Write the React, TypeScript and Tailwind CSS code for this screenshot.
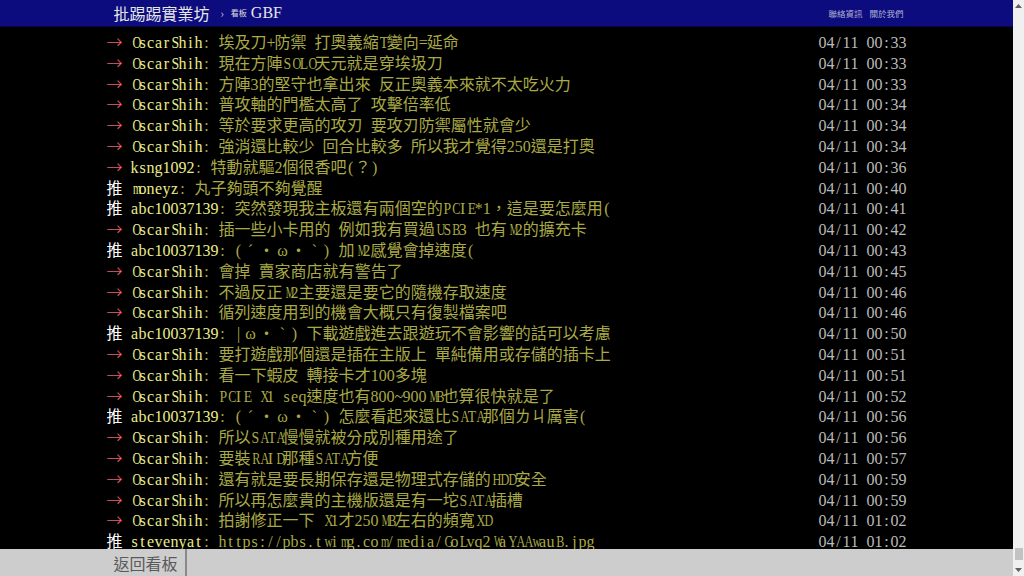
import React from "react";

type Push = {
  tag: "推" | "→";
  user: string;
  text: string;
  time: string;
  link?: boolean;
};

const pushes: Push[] = [
  { tag: "→", user: "OscarShih", text: "埃及刀+防禦 打奧義縮T變向=延命", time: "04/11 00:33" },
  { tag: "→", user: "OscarShih", text: "現在方陣SOLO天元就是穿埃圾刀", time: "04/11 00:33" },
  { tag: "→", user: "OscarShih", text: "方陣3的堅守也拿出來 反正奧義本來就不太吃火力", time: "04/11 00:33" },
  { tag: "→", user: "OscarShih", text: "普攻軸的門檻太高了 攻擊倍率低", time: "04/11 00:34" },
  { tag: "→", user: "OscarShih", text: "等於要求更高的攻刃 要攻刃防禦屬性就會少", time: "04/11 00:34" },
  { tag: "→", user: "OscarShih", text: "強消還比較少 回合比較多 所以我才覺得250還是打奧", time: "04/11 00:34" },
  { tag: "→", user: "ksng1092", text: "特動就驅2個很香吧(？)", time: "04/11 00:36" },
  { tag: "推", user: "moneyz", text: "丸子夠頭不夠覺醒", time: "04/11 00:40" },
  { tag: "推", user: "abc10037139", text: "突然發現我主板還有兩個空的PCIE*1，這是要怎麼用(", time: "04/11 00:41" },
  { tag: "→", user: "OscarShih", text: "插一些小卡用的 例如我有買過USB3 也有M2的擴充卡", time: "04/11 00:42" },
  { tag: "推", user: "abc10037139", text: "(ˊ・ω・ˋ) 加M2感覺會掉速度(", time: "04/11 00:43" },
  { tag: "→", user: "OscarShih", text: "會掉 賣家商店就有警告了", time: "04/11 00:45" },
  { tag: "→", user: "OscarShih", text: "不過反正M2主要還是要它的隨機存取速度", time: "04/11 00:46" },
  { tag: "→", user: "OscarShih", text: "循列速度用到的機會大概只有復製檔案吧", time: "04/11 00:46" },
  { tag: "推", user: "abc10037139", text: "|ω・ˋ) 下載遊戲進去跟遊玩不會影響的話可以考慮", time: "04/11 00:50" },
  { tag: "→", user: "OscarShih", text: "要打遊戲那個還是插在主版上 單純備用或存儲的插卡上", time: "04/11 00:51" },
  { tag: "→", user: "OscarShih", text: "看一下蝦皮 轉接卡才100多塊", time: "04/11 00:51" },
  { tag: "→", user: "OscarShih", text: "PCIE X1 seq速度也有800~900MB也算很快就是了", time: "04/11 00:52" },
  { tag: "推", user: "abc10037139", text: "(ˊ・ω・ˋ) 怎麼看起來還比SATA那個ㄌㄐ厲害(", time: "04/11 00:56" },
  { tag: "→", user: "OscarShih", text: "所以SATA慢慢就被分成別種用途了", time: "04/11 00:56" },
  { tag: "→", user: "OscarShih", text: "要裝RAID那種SATA方便", time: "04/11 00:57" },
  { tag: "→", user: "OscarShih", text: "還有就是要長期保存還是物理式存儲的HDD安全", time: "04/11 00:59" },
  { tag: "→", user: "OscarShih", text: "所以再怎麼貴的主機版還是有一坨SATA插槽", time: "04/11 00:59" },
  { tag: "→", user: "OscarShih", text: "拍謝修正一下 X1才250MB左右的頻寬XD", time: "04/11 01:02" },
  { tag: "推", user: "stevenyat", text: "https://pbs.twimg.com/media/GoLvq2WaYAAwauB.jpg", time: "04/11 01:02", link: true },
];

// squeeze wide serif glyphs into the 8px half-width cell, like the BBS font does
function cellClass(ch: string) {
  if (ch === "M" || ch === "W") return "inline-block scale-x-[0.6]";
  if (ch === "m") return "inline-block scale-x-[0.66]";
  if (ch === "w") return "inline-block scale-x-[0.72]";
  if ("ABCDGHKNOQRUVXY".includes(ch)) return "inline-block scale-x-[0.76]";
  if ("EFLPSTZ&".includes(ch)) return "inline-block scale-x-[0.86]";
  return "inline-block";
}

function Half({ ch }: { ch: string }) {
  return (
    <span className="inline-block w-[8px] text-center whitespace-pre">
      <span className={cellClass(ch)}>{ch}</span>
    </span>
  );
}

function Full({ ch }: { ch: string }) {
  return <span className="inline-block w-[16px] text-center">{ch}</span>;
}

// ASCII -> 8px serif cells, odd symbols -> 16px cells, CJK as is
function Mixed({ text }: { text: string }) {
  return (
    <>
      {Array.from(text).map((ch, i) => {
        if (/[\x20-\x7e]/.test(ch)) return <Half key={i} ch={ch} />;
        if ("ωˊˋ".includes(ch)) return <Full key={i} ch={ch} />;
        return <span key={i}>{ch}</span>;
      })}
    </>
  );
}

function PushRow({ p }: { p: Push }) {
  return (
    <div className="flex items-baseline justify-between h-[20.8px] leading-[20.8px] whitespace-nowrap font-['Liberation_Serif','Noto_Sans_CJK_TC',serif]">
      <div className="flex items-baseline">
        <span
          className={
            p.tag === "推"
              ? "inline-block w-[24px] text-white font-['Noto_Sans_CJK_TC',sans-serif]"
              : "inline-block w-[24px] text-[#ee5f6f] font-['Noto_Sans_CJK_TC',sans-serif] font-light"
          }
        >
          {p.tag}
        </span>
        <span className="text-[#ecec8c]">
          <Mixed text={p.user} />
        </span>
        <span className={p.link ? "text-[#a9a946] underline underline-offset-2" : "text-[#a9a946]"}>
          <Mixed text={": " + p.text} />
        </span>
      </div>
      <span className="text-[#bbbbbb]">
        <Mixed text={p.time} />
      </span>
    </div>
  );
}

export default function App() {
  return (
    <div className="flex h-screen w-full overflow-hidden bg-black font-['Noto_Sans_CJK_TC','Noto_Sans',sans-serif] text-[16px]">
      <div className="flex flex-1 flex-col min-w-0">
        {/* Top bar */}
        <div className="h-[27px] shrink-0 bg-[#0c0c7e] border-b border-[#06063f]">
          <div className="mx-auto flex h-full w-[800px] items-center justify-between pl-[7px] pr-[3px]">
            <div className="flex items-center">
              <span className="text-[16px] text-[#e6e6e6] leading-none">批踢踢實業坊</span>
              <span className="ml-[11px] text-[11px] text-[#c8c8d8]">›</span>
              <span className="ml-[7px] text-[8px] text-[#dddddd]">看板</span>
              <span className="ml-[4px] font-['Liberation_Serif',serif] text-[16px] text-[#e6e6e6]">GBF</span>
            </div>
            <div className="flex items-center gap-[7px] text-[8.5px] text-[#b0b0d4]">
              <span>聯絡資訊</span>
              <span>關於我們</span>
            </div>
          </div>
        </div>

        {/* Push list */}
        <div className="flex-1 overflow-hidden bg-black">
          <div className="mx-auto w-[800px] pt-[4px]">
            {pushes.map((p, i) => (
              <PushRow key={i} p={p} />
            ))}
          </div>
        </div>

        {/* Bottom bar */}
        <div className="h-[27px] shrink-0 bg-[#cdcdcd]">
          <div className="mx-auto flex h-full w-[800px]">
            <div className="flex h-full items-center border-r-2 border-[#8a8a8a] px-[7px] text-[16px] text-[#5a5a5a]">
              返回看板
            </div>
          </div>
        </div>
      </div>

      {/* Scrollbar */}
      <div className="flex w-[11px] shrink-0 flex-col items-center bg-[#f0f0f0]">
        <div className="flex h-[12px] w-full items-center justify-center">
          <svg width="7" height="4" viewBox="0 0 7 4">
            <path d="M0 4 L3.5 0 L7 4 Z" fill="#606060" />
          </svg>
        </div>
        <div className="flex-1" />
        <div className="mb-[4px] h-[12px] w-[8px] bg-[#c2c2c2]" />
        <div className="flex h-[12px] w-full items-center justify-center">
          <svg width="7" height="4" viewBox="0 0 7 4">
            <path d="M0 0 L3.5 4 L7 0 Z" fill="#606060" />
          </svg>
        </div>
      </div>
    </div>
  );
}
